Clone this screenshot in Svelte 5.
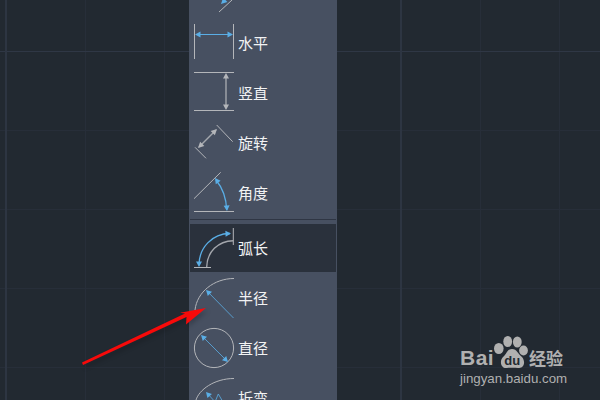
<script>
  // arrow head pointing at (x, y), coming from (fx, fy)
  function head(x, y, fx, fy, len = 5, w = 2.6) {
    const d = Math.hypot(x - fx, y - fy);
    const ux = (x - fx) / d;
    const uy = (y - fy) / d;
    const bx = x - ux * len;
    const by = y - uy * len;
    return `M${x} ${y}L${bx - uy * w} ${by + ux * w}L${bx + uy * w} ${by - ux * w}Z`;
  }

  const items = [
    {
      label: "",
      gray: "M42 32L29 44",
      blue: "",
      fill: head(31, 36, 38, 29, 6, 3)
    },
    {
      label: "水平",
      gray: "M4.5 6V41M43.5 6V41",
      blue: "M6 16.5H42",
      bw: 1.2,
      fill: head(5, 16.5, 20, 16.5, 5.5, 3) + head(43, 16.5, 20, 16.5, 5.5, 3)
    },
    {
      label: "竖直",
      gray: "M4 4.5H44M4 42.5H44",
      line: "M36 8V39",
      grayFill: head(36, 5, 36, 20, 5.5, 3) + head(36, 42, 36, 20, 5.5, 3)
    },
    {
      label: "旋转",
      gray: "M26.7 7L42.7 23.7M5 29.3L16 40.3",
      line: "M26 12L9 29",
      grayFill: head(27, 11, 9, 29, 6, 3) + head(8, 30, 27, 11, 6, 3)
    },
    {
      label: "角度",
      gray: "M4 30.7L30.7 4.3M4 43.5H44",
      blue: "M26 12Q36 24 36.7 42",
      bw: 1.3,
      fill: head(25, 10, 30, 17, 5.5, 3) + head(37, 43, 36.5, 36, 5.5, 3)
    }
  ];

  const lower = [
    {
      label: "半径",
      gray: "M44 5.5C24 5.5 7 19 5 37",
      blue: "M17 18L43.5 45",
      fill: head(16, 17, 26, 27, 5.5, 3)
    },
    {
      label: "直径",
      gray: "",
      circle: true,
      blue: "M12 13L37 38",
      fill: head(11, 12, 24, 25, 5.5, 3) + head(38, 39, 24, 25, 5.5, 3)
    },
    {
      label: "折弯",
      gray: "M44 5.500C24 5.500 9 17 6 27",
      blue: "M17 20L27 31M28.300 21L25 29M28.300 21L33 29",
      fill: head(16, 19, 25, 29, 5.5, 3)
    }
  ];

  const arc = {
    label: "弧长",
    gray: "M43.3 4V21M4 43.5H21",
    line: "M43.3 16.7C28 17 17 28 16.7 43",
    blue: "M40 9.5C22 9.5 9 24 9 41",
    bw: 1.3,
    fill: head(41, 9.5, 30, 10, 5.5, 3) + head(9, 43, 9, 32, 5.5, 3)
  };
</script>

{#snippet row(item, cls)}
  <div class="row {cls}">
    <svg class="icon" width="48" height={cls === "arc" ? 48 : 50} viewBox="0 0 48 {cls === 'arc' ? 48 : 50}" fill="none">
      {#if item.circle}
        <circle cx="24" cy="25" r="19.6" stroke="#b4b6ba" stroke-width="1" />
      {/if}
      <path d={item.gray} stroke="#b4b6ba" stroke-width="1" />
      <path d={item.line} stroke="#a4a7ad" stroke-width="1.4" />
      <path d={item.blue} stroke="#5aaee6" stroke-width={item.bw ?? 0.8} />
      <path d={item.fill} fill="#5aaee6" />
      <path d={item.grayFill} fill="#b4b6ba" />
    </svg>
    <span class="label">{item.label}</span>
  </div>
{/snippet}

<div class="canvas">
  <div class="panel">
    <div class="list">
      {#each items as item}
        {@render row(item, "")}
      {/each}
      <div class="divider"></div>
      {@render row(arc, "arc")}
      <div class="lower">
        {#each lower as item}
          {@render row(item, "")}
        {/each}
      </div>
    </div>
  </div>

  <svg class="pointer" width="600" height="400" viewBox="0 0 600 400">
    <path d="M82 362.500L185 313.500L180 312.700L206 308L186 324.500L186.500 317L83 365Z" fill="#f70a0a" />
  </svg>

  <div class="mark">
    <div class="brand">
      <span class="bai">Bai</span>
      <svg class="paw" width="32" height="33" viewBox="0 0 32 33">
        <ellipse cx="1.800" cy="12.500" rx="4.800" ry="5.500" fill="#b0b0b0" />
        <ellipse cx="10.700" cy="5.500" rx="4.400" ry="5.500" fill="#b0b0b0" />
        <ellipse cx="20.300" cy="6" rx="4.400" ry="5.500" fill="#b0b0b0" />
        <ellipse cx="26.500" cy="14.500" rx="4.400" ry="5" fill="#b0b0b0" />
        <path d="M15 13C10 13 10 18 6 21C2 25 4 33 10 32C13 31.500 18 31.500 21 32C27 33 29 26 25 21C21 18 20 13 15 13Z" fill="#b0b0b0" />
        <text x="15.300" y="29" text-anchor="middle" class="du">du</text>
      </svg>
      <span class="jy">经验</span>
    </div>
    <div class="url">jingyan.baidu.com</div>
  </div>
</div>

<style>
  :global(body) {
    margin: 0;
  }
  .canvas {
    position: relative;
    width: 600px;
    height: 400px;
    overflow: hidden;
    background-color: #222931;
    background-image:
      linear-gradient(90deg, #2d3542 2px, transparent 2px),
      linear-gradient(180deg, #2f3745 1px, transparent 1px),
      linear-gradient(90deg, #272e39 1px, transparent 1px),
      linear-gradient(180deg, #272e39 1px, transparent 1px);
    background-size: 395px 100%, 100% 395px, 79px 100%, 100% 79px;
    background-position: 5px 0, 0 51px, 6px 0, 0 51px;
  }
  .panel {
    width: 148px;
    height: 400px;
    margin-left: 189px;
    background: #475061;
    overflow: hidden;
  }
  .list {
    margin-top: -32px;
    display: flex;
    flex-direction: column;
  }
  .lower {
    margin-top: 1px;
  }
  .row {
    display: flex;
    align-items: center;
    height: 50px;
    flex: none;
    margin-left: 1px;
    margin-right: 1px;
  }
  .row.arc {
    height: 48px;
    background: #2a313c;
  }
  .icon {
    flex: none;
  }
  .label {
    font-family: "Noto Sans CJK SC", sans-serif;
    font-size: 15px;
    line-height: 20px;
    margin-top: -1px;
    color: #f2f3f4;
  }
  .divider {
    height: 1px;
    margin: 1px 1px 4px;
    background: #2f3644;
  }
  .pointer {
    position: absolute;
    left: 0;
    top: 0;
    filter: drop-shadow(2px 3px 2px rgba(0, 0, 0, 0.2));
  }
  .mark {
    position: absolute;
    left: 460px;
    top: 335px;
    width: 110px;
    color: #b0b0b0;
  }
  .brand {
    display: flex;
    align-items: flex-end;
    height: 34px;
  }
  .bai {
    font-family: "Liberation Sans", sans-serif;
    font-weight: 700;
    font-size: 21px;
    line-height: 24px;
    width: 37px;
    flex: none;
    letter-spacing: 0.5px;
    transform: translateY(1px);
  }
  .paw {
    flex: none;
    overflow: visible;
  }
  .du {
    font-family: "Liberation Sans", sans-serif;
    font-weight: 700;
    font-size: 13px;
    fill: #222931;
  }
  .jy {
    font-family: "Noto Sans CJK SC", sans-serif;
    font-weight: 700;
    font-size: 17px;
    line-height: 22px;
  }
  .url {
    font-family: "Liberation Sans", sans-serif;
    font-size: 13.3px;
    line-height: 16px;
    margin-top: 2px;
    white-space: nowrap;
  }
</style>
